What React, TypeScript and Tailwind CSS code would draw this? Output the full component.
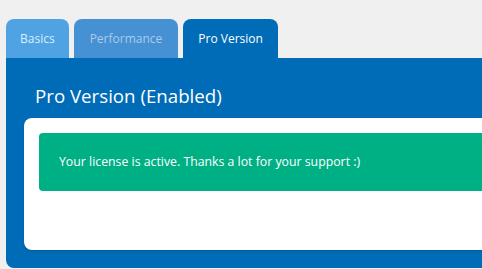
export default function App() {
  const font = { fontFamily: '"Open Sans", "Noto Sans", sans-serif' };
  return (
    <div className="min-h-screen bg-[#f0f0f0] pt-[19px] pl-[6px] overflow-hidden" style={font}>
      {/* tabs */}
      <div className="flex gap-[5px] h-[39px]">
        <div className="rounded-t-[8px] bg-[#4fa3e3] text-[#dcedfc] text-[12px] px-[14px] flex items-center">Basics</div>
        <div className="rounded-t-[8px] bg-[#4691d3] text-[#a9cbec] text-[12px] px-[16px] flex items-center">Performance</div>
        <div className="rounded-t-[8px] bg-[#006bb6] text-white text-[12px] px-[15px] flex items-center">Pro Version</div>
      </div>

      {/* panel */}
      <div className="bg-[#006bb6] rounded-bl-[8px] pl-[18px] pt-[24px] pb-[18px]">
        <h2 className="text-[18.7px] leading-[28px] text-white ml-[11px] mb-[8px]">Pro Version (Enabled)</h2>
        <div className="bg-white rounded-l-[8px] shadow-[0_1px_2px_rgba(0,0,0,0.15)] pl-[15px] pt-[15px] pb-[59px]">
          <div className="bg-[#00b085] rounded-l-[4px] h-[58px] flex items-center pl-[20px] text-white text-[12.3px]">
            Your license is active. Thanks a lot for your support :)
          </div>
        </div>
      </div>
    </div>
  );
}
